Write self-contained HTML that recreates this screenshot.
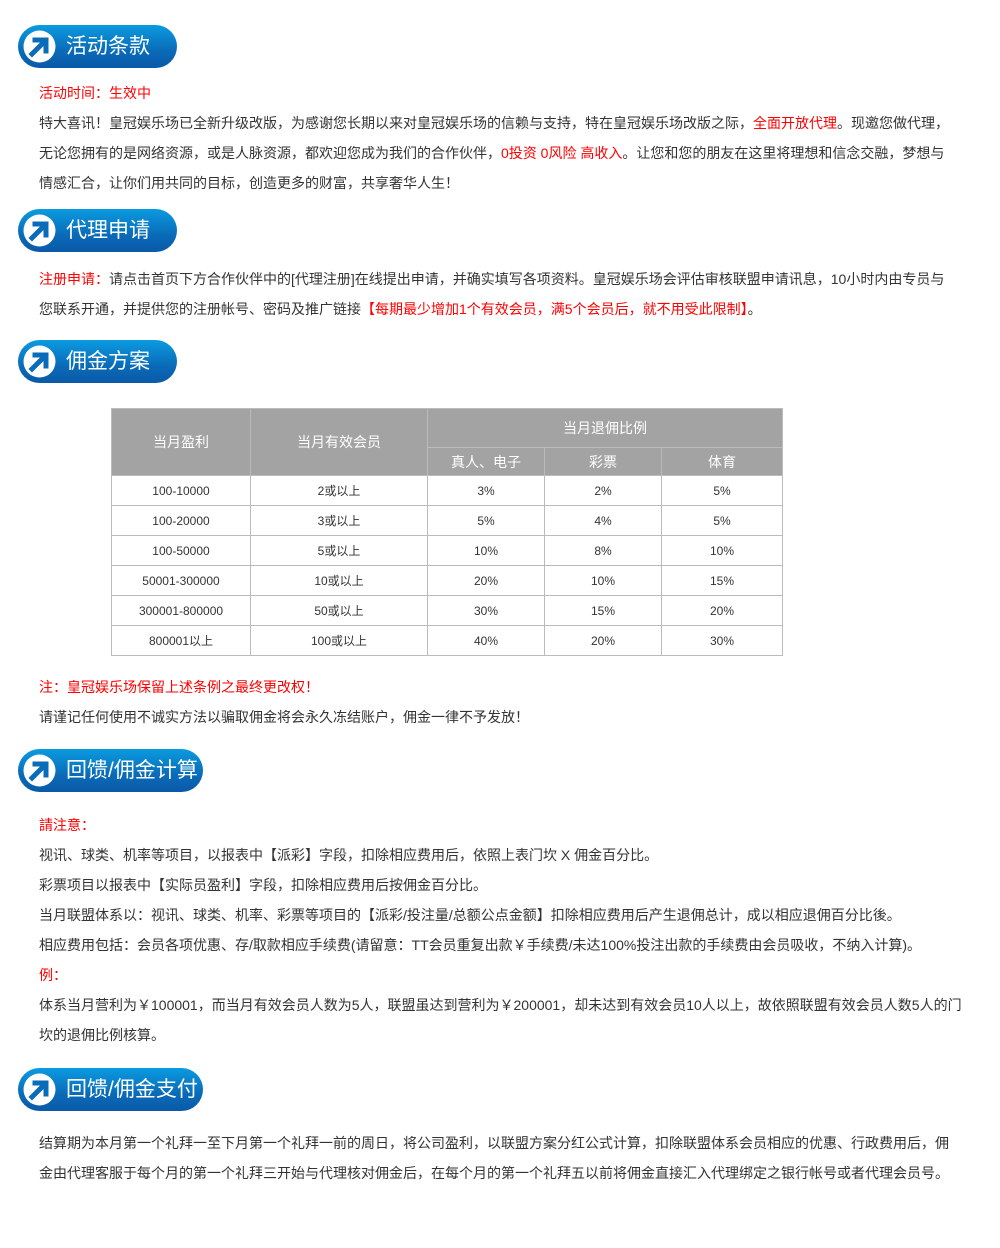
<!DOCTYPE html>
<html><head><meta charset="utf-8"><style>
body{margin:0;width:1000px;height:1248px;background:#fff;position:relative;font-family:"Liberation Sans","Noto Sans CJK SC",sans-serif;font-size:14px;color:#333;}
.b{position:absolute;left:18px;height:43px;border-radius:22px;background:linear-gradient(#0a9be0,#0a6bb8 60%,#0a5aa8);color:#fff;font-size:21px;line-height:43px;box-sizing:border-box;padding-left:48px;white-space:nowrap;}
.b svg{position:absolute;left:4px;top:4px;}
.t{position:absolute;left:39px;width:920px;line-height:30px;white-space:nowrap;}
.r{color:#f00}
table{position:absolute;left:111px;top:408px;border-collapse:collapse;width:672px;font-size:12px;}
td,th{border:1px solid #bbb;text-align:center;padding:0;}
th{background:#a3a3a3;color:#fff;font-weight:normal;font-size:14px;}
</style></head><body>
<svg width="0" height="0" style="position:absolute"><defs><g id="ic"><circle cx="17.5" cy="17.5" r="16" fill="#fff"/><path d="M10 25 L22 13 M13 11 H24 V22" stroke="#0a6bb8" stroke-width="5" fill="none" stroke-linecap="square"/></g></defs></svg>
<div class="b" style="top:25px;width:159px"><svg width="35" height="35"><use href="#ic"/></svg>活动条款</div>
<div class="t" style="top:78px"><span class="r">活动时间：生效中</span></div>
<div class="t" style="top:108px">特大喜讯！皇冠娱乐场已全新升级改版，为感谢您长期以来对皇冠娱乐场的信赖与支持，特在皇冠娱乐场改版之际，<span class="r">全面开放代理</span>。现邀您做代理，<br>无论您拥有的是网络资源，或是人脉资源，都欢迎您成为我们的合作伙伴，<span class="r">0投资 0风险 高收入</span>。让您和您的朋友在这里将理想和信念交融，梦想与<br>情感汇合，让你们用共同的目标，创造更多的财富，共享奢华人生！</div>
<div class="b" style="top:209px;width:159px"><svg width="35" height="35"><use href="#ic"/></svg>代理申请</div>
<div class="t" style="top:264px"><span class="r">注册申请：</span>请点击首页下方合作伙伴中的[代理注册]在线提出申请，并确实填写各项资料。皇冠娱乐场会评估审核联盟申请讯息，10小时内由专员与<br>您联系开通，并提供您的注册帐号、密码及推广链接<span class="r">【每期最少增加1个有效会员，满5个会员后，就不用受此限制】</span>。</div>
<div class="b" style="top:340px;width:159px"><svg width="35" height="35"><use href="#ic"/></svg>佣金方案</div>
<table>
<tr style="height:39px"><th rowspan="2" style="width:138px">当月盈利</th><th rowspan="2" style="width:176px">当月有效会员</th><th colspan="3">当月退佣比例</th></tr>
<tr style="height:28px"><th style="width:116px">真人、电子</th><th style="width:116px">彩票</th><th>体育</th></tr>
<tr style="height:30px"><td>100-10000</td><td>2或以上</td><td>3%</td><td>2%</td><td>5%</td></tr>
<tr style="height:30px"><td>100-20000</td><td>3或以上</td><td>5%</td><td>4%</td><td>5%</td></tr>
<tr style="height:30px"><td>100-50000</td><td>5或以上</td><td>10%</td><td>8%</td><td>10%</td></tr>
<tr style="height:30px"><td>50001-300000</td><td>10或以上</td><td>20%</td><td>10%</td><td>15%</td></tr>
<tr style="height:30px"><td>300001-800000</td><td>50或以上</td><td>30%</td><td>15%</td><td>20%</td></tr>
<tr style="height:30px"><td>800001以上</td><td>100或以上</td><td>40%</td><td>20%</td><td>30%</td></tr>
</table>
<div class="t" style="top:672px"><span class="r">注：皇冠娱乐场保留上述条例之最终更改权！</span><br>请谨记任何使用不诚实方法以骗取佣金将会永久冻结账户，佣金一律不予发放！</div>
<div class="b" style="top:749px;width:185px"><svg width="35" height="35"><use href="#ic"/></svg>回馈/佣金计算</div>
<div class="t" style="top:810px"><span class="r">請注意：</span><br>视讯、球类、机率等项目，以报表中【派彩】字段，扣除相应费用后，依照上表门坎 X 佣金百分比。<br>彩票项目以报表中【实际员盈利】字段，扣除相应费用后按佣金百分比。<br>当月联盟体系以：视讯、球类、机率、彩票等项目的【派彩/投注量/总额公点金额】扣除相应费用后产生退佣总计，成以相应退佣百分比後。<br>相应费用包括：会员各项优惠、存/取款相应手续费(请留意：TT会员重复出款￥手续费/未达100%投注出款的手续费由会员吸收，不纳入计算)。<br><span class="r">例：</span><br>体系当月营利为￥100001，而当月有效会员人数为5人，联盟虽达到营利为￥200001，却未达到有效会员10人以上，故依照联盟有效会员人数5人的门<br>坎的退佣比例核算。</div>
<div class="b" style="top:1068px;width:185px"><svg width="35" height="35"><use href="#ic"/></svg>回馈/佣金支付</div>
<div class="t" style="top:1128px">结算期为本月第一个礼拜一至下月第一个礼拜一前的周日，将公司盈利，以联盟方案分红公式计算，扣除联盟体系会员相应的优惠、行政费用后，佣<br>金由代理客服于每个月的第一个礼拜三开始与代理核对佣金后，在每个月的第一个礼拜五以前将佣金直接汇入代理绑定之银行帐号或者代理会员号。</div>
</body></html>
